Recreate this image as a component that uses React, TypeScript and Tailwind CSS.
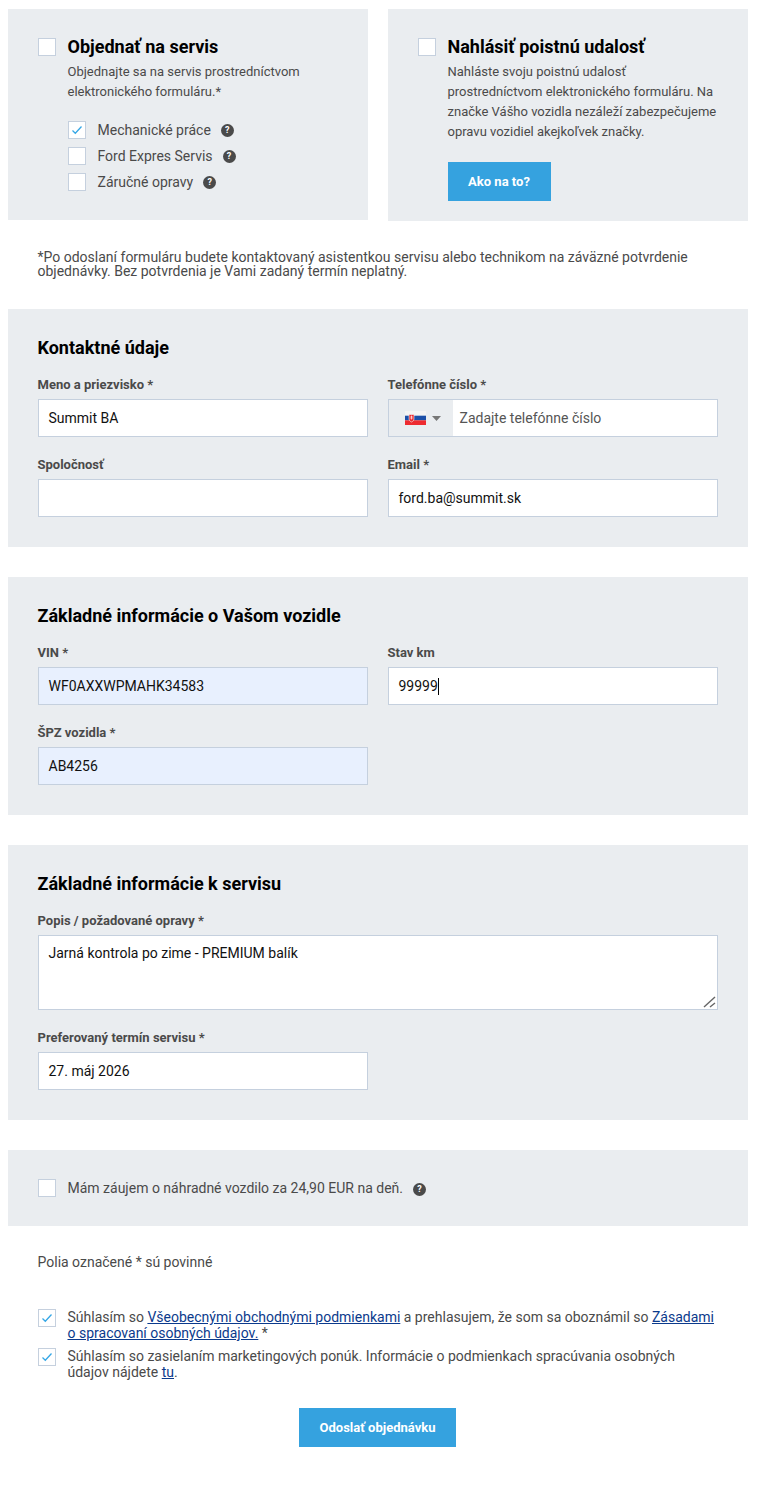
import React from "react";

function Check({ checked = false, className = "" }: { checked?: boolean; className?: string }) {
  return (
    <span className={`flex h-[18px] w-[18px] shrink-0 items-center justify-center border border-[#c5d0de] bg-white ${className}`}>
      {checked && (
        <svg width="12" height="10" viewBox="0 0 12 10" fill="none">
          <path d="M1.5 5.5 L4.3 8.2 L10.5 1.5" stroke="#35a7e6" strokeWidth="1.3" />
        </svg>
      )}
    </span>
  );
}

function Help({ className = "" }: { className?: string }) {
  return (
    <span className={`flex h-[13px] w-[13px] shrink-0 items-center justify-center rounded-full bg-[#4a4a4a] text-[9px] font-bold leading-none text-white ${className}`}>
      ?
    </span>
  );
}

function Field({ label, value, bg = "bg-white" }: { label: string; value: string; bg?: string }) {
  return (
    <div className="w-[330px]">
      <div className="mb-[7px] h-[14px] text-[13px] font-bold leading-[14px] text-[#4a4a4a]">{label}</div>
      <div className={`flex h-[38px] items-center border border-[#c5d0de] px-[10px] text-[14px] text-[#111] ${bg}`}>{value}</div>
    </div>
  );
}

function Section({ title, children, className = "" }: { title: string; children: React.ReactNode; className?: string }) {
  return (
    <section className={`bg-[#eaedf0] px-[30px] pb-[30px] pt-[29px] ${className}`}>
      <h2 className="mb-[20px] h-[20px] text-[18px] font-bold leading-[20px] text-black">{title}</h2>
      {children}
    </section>
  );
}

function SubOption({ label, help }: { label: string; help: string }) {
  return (
    <div className="flex h-[18px] items-center">
      <Check checked={label === "Mechanické práce"} />
      <span className="ml-[12px] text-[14px] leading-[18px] text-[#4a4a4a]">{label}</span>
      <Help className={help} />
    </div>
  );
}

const link = "text-[#0b3a8c] underline";

export default function App() {
  return (
    <div className="h-[1485px] w-[761px] bg-white pl-[7.5px] pt-[9px] font-['Roboto',sans-serif]">
      <div className="w-[740px]">
        <div className="flex gap-[20px]">
          <div className="flex h-[211px] w-[360px] bg-[#eaedf0] pl-[30px] pt-[27px]">
            <Check className="mt-[2px]" />
            <div className="ml-[12px]">
              <h2 className="text-[18px] font-bold leading-[22px] text-black">Objednať na servis</h2>
              <p className="mt-[4px] text-[13px] leading-[20px] text-[#4a4a4a]">
                Objednajte sa na servis prostredníctvom
                <br />
                elektronického formuláru.*
              </p>
              <div className="mt-[19px] flex flex-col gap-[8px]">
                <SubOption label="Mechanické práce" help="ml-[10px] mt-[1px]" />
                <SubOption label="Ford Expres Servis" help="ml-[10px] mt-[1px]" />
                <SubOption label="Záručné opravy" help="ml-[10px] mt-[1px]" />
              </div>
            </div>
          </div>
          <div className="flex h-[212px] w-[360px] bg-[#eaedf0] pl-[30px] pt-[27px]">
            <Check className="mt-[2px]" />
            <div className="ml-[12px]">
              <h2 className="text-[18px] font-bold leading-[22px] text-black">Nahlásiť poistnú udalosť</h2>
              <p className="mt-[4px] text-[13px] leading-[20px] text-[#4a4a4a]">
                Nahláste svoju poistnú udalosť
                <br />
                prostredníctvom elektronického formuláru. Na
                <br />
                značke Vášho vozidla nezáleží zabezpečujeme
                <br />
                opravu vozidiel akejkoľvek značky.
              </p>
              <button className="mt-[20px] flex h-[39px] w-[103px] items-center justify-center bg-[#35a2df] text-[13px] font-bold text-white">
                Ako na to?
              </button>
            </div>
          </div>
        </div>

        <p className="mx-[30px] mt-[29px] text-[14px] leading-[14px] text-[#4a4a4a]">
          *Po odoslaní formuláru budete kontaktovaný asistentkou servisu alebo technikom na záväzné potvrdenie objednávky. Bez potvrdenia je Vami zadaný termín neplatný.
        </p>

        <Section title="Kontaktné údaje" className="mt-[31px] h-[238px]">
          <div className="grid grid-cols-[330px_330px] gap-x-[20px] gap-y-[21px]">
            <Field label="Meno a priezvisko *" value="Summit BA" />
            <div className="w-[330px]">
              <div className="mb-[7px] h-[14px] text-[13px] font-bold leading-[14px] text-[#4a4a4a]">Telefónne číslo *</div>
              <div className="flex h-[38px] items-center border border-[#c5d0de] bg-white text-[14px]">
                <div className="flex h-full w-[64px] items-center bg-[#eaedf0] pl-[16px]">
                  <svg width="21" height="14" viewBox="0 0 21 14">
                    <rect width="21" height="4.7" fill="#f4f4f4" />
                    <rect y="4.7" width="21" height="4.6" fill="#1c4fa8" />
                    <rect y="9.3" width="21" height="4.7" fill="#ee2b30" />
                    <path d="M4 3.5h5v4.5c0 1.5-1.2 2.4-2.5 3C5.2 10.4 4 9.5 4 8z" fill="#ee2b30" stroke="#f4f4f4" strokeWidth="0.6" />
                    <path d="M6.5 4.5v4M5.5 5.7h2M5.2 7h2.6" stroke="#fff" strokeWidth="0.6" />
                  </svg>
                  <svg className="ml-[6px]" width="9" height="5" viewBox="0 0 9 5">
                    <path d="M0 0h9L4.5 5z" fill="#777" />
                  </svg>
                </div>
                <span className="ml-[7px] text-[#555]">Zadajte telefónne číslo</span>
              </div>
            </div>
            <Field label="Spoločnosť" value="" />
            <Field label="Email *" value="ford.ba@summit.sk" />
          </div>
        </Section>

        <Section title="Základné informácie o Vašom vozidle" className="mt-[30px] h-[238px]">
          <div className="grid grid-cols-[330px_330px] gap-x-[20px] gap-y-[21px]">
            <Field label="VIN *" value="WF0AXXWPMAHK34583" bg="bg-[#e8f0fe]" />
            <div className="w-[330px]">
              <div className="mb-[7px] h-[14px] text-[13px] font-bold leading-[14px] text-[#4a4a4a]">Stav km</div>
              <div className="flex h-[38px] items-center border border-[#c5d0de] bg-white px-[10px] text-[14px] text-[#111]">
                99999
                <span className="h-[17px] w-px bg-black" />
              </div>
            </div>
            <Field label="ŠPZ vozidla *" value="AB4256" bg="bg-[#e8f0fe]" />
          </div>
        </Section>

        <Section title="Základné informácie k servisu" className="mt-[30px] h-[275px]">
          <div className="text-[13px] font-bold leading-[14px] text-[#4a4a4a]">Popis / požadované opravy *</div>
          <div className="relative mt-[7px] h-[75px] border border-[#c5d0de] bg-white px-[10px] pt-[8px] text-[14px] leading-[18px] text-[#111]">
            Jarná kontrola po zime - PREMIUM balík
            <svg className="absolute bottom-[1px] right-[1px]" width="13" height="13" viewBox="0 0 13 13" fill="none">
              <path d="M1 12 L12 2 M7 12 L12 8" stroke="#666" strokeWidth="1.4" />
            </svg>
          </div>
          <div className="mt-[21px] w-[330px]">
            <div className="mb-[7px] h-[14px] text-[13px] font-bold leading-[14px] text-[#4a4a4a]">Preferovaný termín servisu *</div>
            <div className="flex h-[38px] items-center border border-[#c5d0de] bg-white px-[10px] text-[14px] text-[#111]">27. máj 2026</div>
          </div>
        </Section>

        <section className="mt-[30px] flex h-[76px] items-center bg-[#eaedf0] pl-[30px]">
          <Check />
          <span className="ml-[12px] text-[14px] text-[#4a4a4a]">Mám záujem o náhradné vozdilo za 24,90 EUR na deň.</span>
          <Help className="ml-[10px] mt-[2px]" />
        </section>

        <p className="ml-[30px] mt-[28px] text-[14px] leading-[16px] text-[#4a4a4a]">Polia označené * sú povinné</p>

        <div className="mx-[30px] mt-[39px] flex flex-col gap-[7px]">
          <div className="flex">
            <Check checked />
            <p className="ml-[12px] text-[14px] leading-[16px] text-[#4a4a4a]">
              Súhlasím so <a className={link}>Všeobecnými obchodnými podmienkami</a> a prehlasujem, že som sa oboznámil so <a className={link}>Zásadami o spracovaní osobných údajov.</a> *
            </p>
          </div>
          <div className="flex">
            <Check checked />
            <p className="ml-[12px] text-[14px] leading-[16px] text-[#4a4a4a]">
              Súhlasím so zasielaním marketingových ponúk. Informácie o podmienkach spracúvania osobných údajov nájdete <a className={link}>tu</a>.
            </p>
          </div>
        </div>

        <div className="mt-[28px] flex justify-center">
          <button className="flex h-[39px] w-[157px] items-center justify-center bg-[#35a2df] text-[13px] font-bold text-white">
            Odoslať objednávku
          </button>
        </div>
      </div>
    </div>
  );
}
